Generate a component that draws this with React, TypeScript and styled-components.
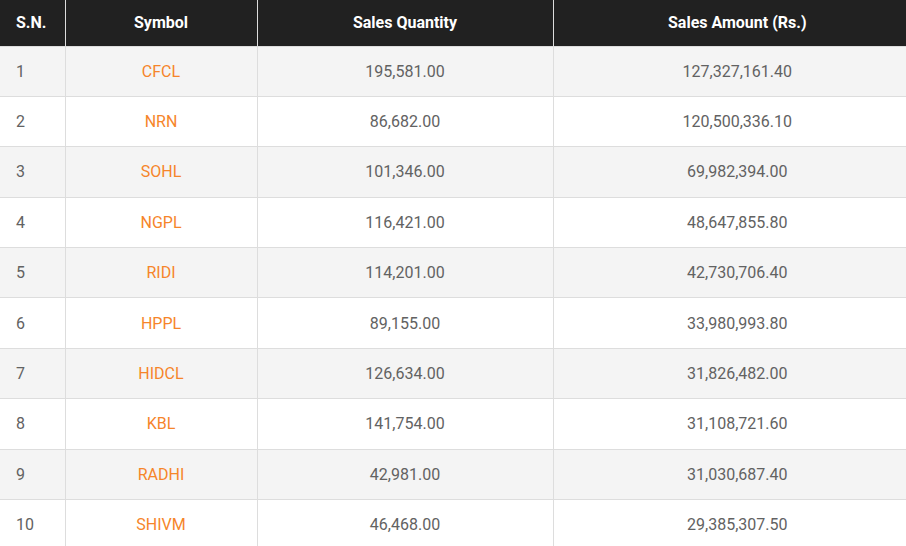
import styled, { createGlobalStyle } from "styled-components";

const GlobalStyle = createGlobalStyle`
  html, body {
    margin: 0;
    padding: 0;
    background: #ffffff;
  }
  body {
    font-family: Roboto, "Liberation Sans", Arial, sans-serif;
  }
`;

const Wrapper = styled.div`
  width: 100%;
  overflow: hidden;
`;

const Table = styled.table`
  width: 921px;
  border-collapse: collapse;
  font-size: 16px;
  color: #626262;
`;

const HeadCell = styled.th<{ $align?: string; $width: number }>`
  width: ${p => p.$width}px;
  height: 46px;
  padding: 0 16px;
  box-sizing: border-box;
  background: #212121;
  color: #ffffff;
  font-weight: 700;
  text-align: ${p => p.$align || "center"};
  border-left: 1px solid #dddddd;
  border-bottom: 1px solid #dddddd;
  &:first-child {
    border-left: none;
  }
`;

const Row = styled.tr<{ $striped: boolean }>`
  height: 50.4px;
  background: ${p => (p.$striped ? "#f4f4f4" : "#ffffff")};
`;

const Cell = styled.td<{ $align?: string }>`
  padding: 0 16px;
  text-align: ${p => p.$align || "center"};
  border-left: 1px solid #dddddd;
  border-bottom: 1px solid #dddddd;
  &:first-child {
    border-left: none;
  }
`;

const SymbolLink = styled.a`
  color: #f6852a;
  text-decoration: none;
`;

interface Sale {
  symbol: string;
  quantity: string;
  amount: string;
}

const SALES: Sale[] = [
  { symbol: "CFCL", quantity: "195,581.00", amount: "127,327,161.40" },
  { symbol: "NRN", quantity: "86,682.00", amount: "120,500,336.10" },
  { symbol: "SOHL", quantity: "101,346.00", amount: "69,982,394.00" },
  { symbol: "NGPL", quantity: "116,421.00", amount: "48,647,855.80" },
  { symbol: "RIDI", quantity: "114,201.00", amount: "42,730,706.40" },
  { symbol: "HPPL", quantity: "89,155.00", amount: "33,980,993.80" },
  { symbol: "HIDCL", quantity: "126,634.00", amount: "31,826,482.00" },
  { symbol: "KBL", quantity: "141,754.00", amount: "31,108,721.60" },
  { symbol: "RADHI", quantity: "42,981.00", amount: "31,030,687.40" },
  { symbol: "SHIVM", quantity: "46,468.00", amount: "29,385,307.50" },
];

function App() {
  return (
    <Wrapper>
      <GlobalStyle />
      <Table>
        <thead>
          <tr>
            <HeadCell $width={65} $align='left'>S.N.</HeadCell>
            <HeadCell $width={192}>Symbol</HeadCell>
            <HeadCell $width={296}>Sales Quantity</HeadCell>
            <HeadCell $width={368}>Sales Amount (Rs.)</HeadCell>
          </tr>
        </thead>
        <tbody>
          {SALES.map((sale, index) => (
            <Row key={sale.symbol} $striped={index % 2 === 0}>
              <Cell $align='left'>{index + 1}</Cell>
              <Cell>
                <SymbolLink href='#'>{sale.symbol}</SymbolLink>
              </Cell>
              <Cell>{sale.quantity}</Cell>
              <Cell>{sale.amount}</Cell>
            </Row>
          ))}
        </tbody>
      </Table>
    </Wrapper>
  );
}

export default App;
